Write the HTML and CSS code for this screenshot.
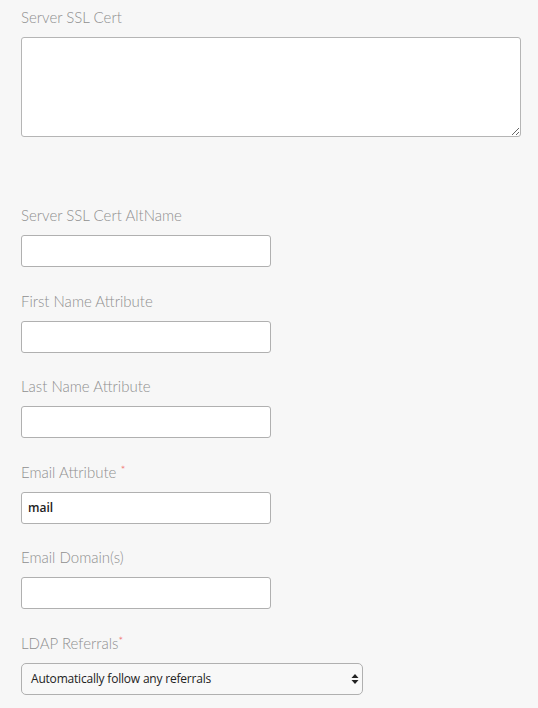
FILE: index.html
```html
<!DOCTYPE html>
<html>
<head>
<meta charset="utf-8">
<link rel="stylesheet" href="styles.css">
</head>
<body>
<form class="form">
  <div class="field field-wide">
    <label class="label">Server SSL Cert</label>
    <textarea class="textarea"></textarea>
  </div>
  <div class="field">
    <label class="label">Server SSL Cert AltName</label>
    <input class="input" type="text">
  </div>
  <div class="field">
    <label class="label">First Name Attribute</label>
    <input class="input" type="text">
  </div>
  <div class="field">
    <label class="label">Last Name Attribute</label>
    <input class="input" type="text">
  </div>
  <div class="field">
    <label class="label">Email Attribute <span class="req">*</span></label>
    <input class="input" type="text" value="mail">
  </div>
  <div class="field">
    <label class="label">Email Domain(s)</label>
    <input class="input" type="text">
  </div>
  <div class="field">
    <label class="label">LDAP Referrals<span class="req">*</span></label>
    <div class="select">
      <span class="select-text">Automatically follow any referrals</span>
      <svg class="select-arrows" width="8" height="12" viewBox="0 0 8 12"><path d="M4 1 L7.5 5 L0.5 5 Z M4 11 L7.5 7 L0.5 7 Z" fill="#222"/></svg>
    </div>
  </div>
</form>
</body>
</html>
```
FILE: styles.css
```css
html, body {
  margin: 0;
  padding: 0;
  background: #f7f7f7;
}
body {
  font-family: "Lato", "Open Sans", sans-serif;
}
.form {
  padding: 7px 0 0 21px;
}
.field {
  display: flex;
  flex-direction: column;
  align-items: flex-start;
  margin-bottom: 23.5px;
}
.field-wide {
  margin-bottom: 68px;
}
.label {
  display: block;
  font-size: 15px;
  font-weight: 300;
  line-height: 20px;
  color: #8f8f8f;
  margin-bottom: 10px;
}
.req {
  color: #f0625a;
  font-size: 12px;
  vertical-align: top;
  line-height: 16px;
}
.textarea {
  box-sizing: border-box;
  width: 500px;
  height: 100px;
  border: 1px solid #b5b5b5;
  border-radius: 3px;
  background: #fff;
  margin: 0;
  padding: 6px 8px;
  resize: both;
}
.input {
  box-sizing: border-box;
  width: 250px;
  height: 32px;
  border: 1px solid #b0b0b0;
  border-radius: 3px;
  background: #fff;
  margin: 0;
  padding: 0 6px;
  font-family: "Open Sans", sans-serif;
  font-size: 12px;
  font-weight: 600;
  color: #222;
}
.select {
  box-sizing: border-box;
  width: 342px;
  height: 32px;
  border: 1px solid #b0b0b0;
  border-radius: 5px;
  background: #f8f8f8;
  display: flex;
  align-items: center;
  justify-content: space-between;
  padding: 0 3px 0 9px;
}
.select-text {
  font-family: "Open Sans", sans-serif;
  font-size: 12px;
  font-weight: 400;
  letter-spacing: -0.2px;
  color: #222;
}
.select-arrows {
  display: block;
}
```
